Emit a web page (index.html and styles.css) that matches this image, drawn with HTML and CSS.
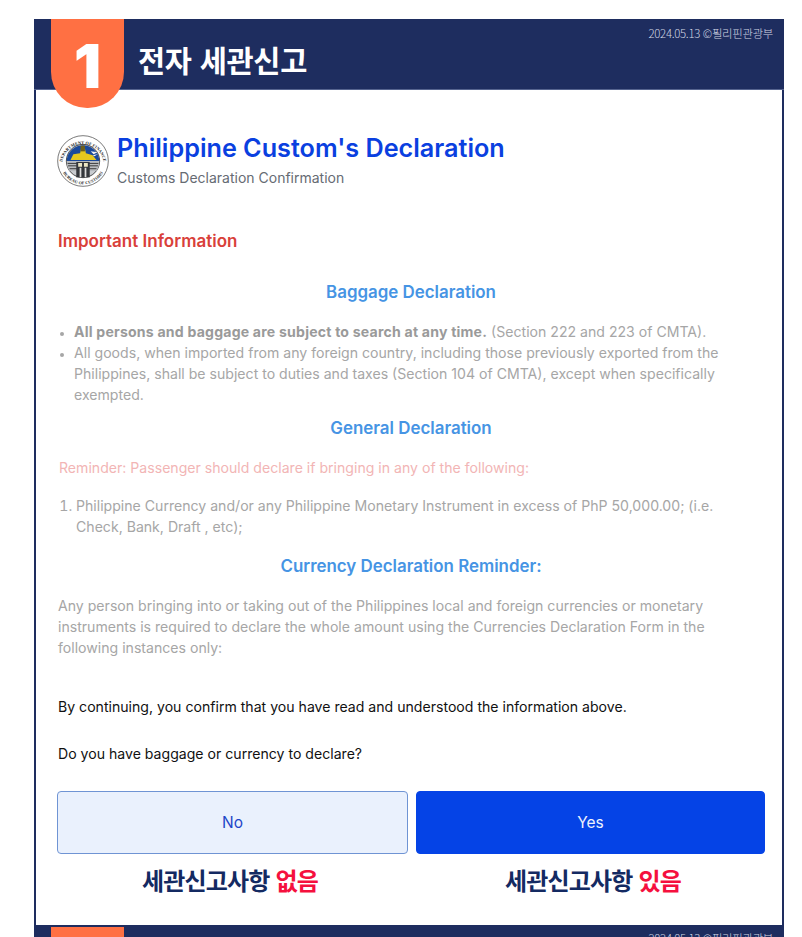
FILE: index.html
```html
<!DOCTYPE html>
<html lang="ko">
<head>
<meta charset="utf-8">
<title>전자 세관신고</title>
<link rel="stylesheet" href="styles.css">
</head>
<body>
<div class="frame">
  <header class="bar">
    <div class="tab"><span class="tab-num">1</span></div>
    <h1 class="bar-title">전자 세관신고</h1>
    <p class="bar-note">2024.05.13 ©필리핀관광부</p>
  </header>
  <main class="content">
    <div class="brand">
      <svg class="seal" viewBox="0 0 54 54" aria-hidden="true">
        <defs>
          <path id="ring-top" d="M5.500 29a21.600 21.600 0 0 1 43 0"/>
          <path id="ring-bottom" d="M3.300 31a24 24 0 0 0 47.400 0"/>
        </defs>
        <circle cx="27" cy="27" r="26.300" fill="#fff" stroke="#666" stroke-width="0.9"/>
        <circle cx="27" cy="27" r="17.300" fill="#c9ccd0" stroke="#222" stroke-width="0.8"/>
        <text class="seal-text"><textPath href="#ring-top" startOffset="50%" text-anchor="middle">DEPARTMENT OF FINANCE</textPath></text>
        <text class="seal-text"><textPath href="#ring-bottom" startOffset="50%" text-anchor="middle">BUREAU OF CUSTOMS</textPath></text>
        <path d="M10.200 25a17 17 0 0 1 33.600 0v2H10.200z" fill="#1b4a9c"/>
        <path d="M35 17l7 1-4 2zM37 21l5-1-3 2z" fill="#f2f2f2"/>
        <path d="M14 26l3-6 7-1 1-5h4l1 5 7 2 4 5z" fill="#e6c81e"/>
        <path d="M24.500 11h4.500v6h-4.500z" fill="#6e5f1a"/>
        <path d="M10.100 27h33.800c0 4-1 7-3 10.500H13.100c-2-3.500-3-6.500-3-10.500z" fill="#b9bcc0"/>
        <path d="M11 29.500h32M11.500 32h31M13 35h28" stroke="#2a2a2a" stroke-width="0.9"/>
        <path d="M20 28h14v16h-14z" fill="#34373c"/>
        <path d="M22 29h4v4h-4zM28 29h4v4h-4z" fill="#ece6c4"/>
        <path d="M23.500 34h1.800v10h-1.800zM28.700 34h1.800v10h-1.800z" fill="#dcdcdc"/>
      </svg>
      <div class="brand-text">
        <h2 class="brand-title">Philippine Custom's Declaration</h2>
        <p class="brand-sub">Customs Declaration Confirmation</p>
      </div>
    </div>

    <h3 class="important">Important Information</h3>

    <h4 class="section-head head-baggage">Baggage Declaration</h4>
    <ul class="bullets">
      <li><strong>All persons and baggage are subject to search at any time.</strong> (Section 222 and 223 of CMTA).</li>
      <li>All goods, when imported from any foreign country, including those previously exported from the Philippines, shall be subject to duties and taxes (Section 104 of CMTA), except when specifically exempted.</li>
    </ul>

    <h4 class="section-head head-general">General Declaration</h4>
    <p class="reminder">Reminder: Passenger should declare if bringing in any of the following:</p>
    <ol class="numbers">
      <li>Philippine Currency and/or any Philippine Monetary Instrument in excess of PhP 50,000.00; (i.e. Check, Bank, Draft , etc);</li>
    </ol>

    <h4 class="section-head head-currency">Currency Declaration Reminder:</h4>
    <p class="muted">Any person bringing into or taking out of the Philippines local and foreign currencies or monetary instruments is required to declare the whole amount using the Currencies Declaration Form in the following instances only:</p>

    <p class="confirm">By continuing, you confirm that you have read and understood the information above.</p>
    <p class="question">Do you have baggage or currency to declare?</p>

    <div class="choices">
      <div class="choice">
        <button class="btn btn-no" type="button">No</button>
        <p class="caption caption-left">세관신고사항 <span class="caption-red">없음</span></p>
      </div>
      <div class="choice">
        <button class="btn btn-yes" type="button">Yes</button>
        <p class="caption caption-right">세관신고사항 <span class="caption-red">있음</span></p>
      </div>
    </div>
  </main>
  <div class="bar bar-next">
    <div class="tab tab-next"></div>
    <p class="bar-note note-next">2024.05.13 ©필리핀관광부</p>
  </div>
</div>
</body>
</html>
```
FILE: styles.css
```css
* { box-sizing: border-box; }
html, body { margin: 0; height: 937px; overflow: hidden; background: #fff; }
body { padding: 19px 0 0 34px; font-family: Inter, "Noto Sans CJK KR", sans-serif; }
h1, h2, h3, h4, p, ul, ol { margin: 0; padding: 0; font-weight: 400; }

.frame { width: 750px; }

.bar { position: relative; height: 71px; background: #1e2d5f; border-bottom: 1px solid #56648f; }
.tab {
  position: absolute; left: 17px; top: 0; width: 73px; height: 89px;
  display: flex; justify-content: center; align-items: center; padding-top: 4px;
  background: #ff7043; border-radius: 0 0 36px 36px; z-index: 1;
}
.tab-num { font-size: 60px; font-weight: 900; line-height: 1; color: #fff; font-family: Inter, sans-serif; }
.bar-title {
  position: absolute; left: 104px; top: 20px;
  font: 700 29.500px/40px "Noto Sans CJK KR", sans-serif; color: #fff; letter-spacing: -0.3px;
}
.bar-note {
  position: absolute; right: 11px; top: 6px;
  font: 300 11.400px/16px "Noto Sans CJK KR", sans-serif; color: #d3d7e4; letter-spacing: -0.3px;
}

.content {
  height: 835px; margin: 0; padding: 43px 18px 0 22px;
  background: #fff; border: solid #1e2d5f; border-width: 0 2px;
}

.brand { display: flex; align-items: flex-start; gap: 7px; height: 55px; }
.seal { width: 52px; height: 52px; flex: none; margin: 2px 0 0 -1px; }
.seal-text { font: 700 4.400px "Liberation Serif", serif; fill: #222; letter-spacing: 0.1px; }
.brand-text { margin-left: 1px; }
.brand-title { font-size: 25.200px; line-height: 30px; font-weight: 600; color: #0a40e0; }
.brand-sub { font-size: 14px; line-height: 20px; margin-top: 5px; color: #666b73; }

.important { margin-top: 41px; font-size: 17px; line-height: 24px; font-weight: 600; color: #d9403a; }

.section-head { font-size: 16.900px; line-height: 24px; font-weight: 600; color: #4694e4; text-align: center; }
.head-baggage { margin-top: 27px; }
.head-general { margin-top: 11px; }
.head-currency { margin-top: 17px; }

.bullets { margin-top: 17px; padding-left: 16px; font-size: 14.100px; line-height: 21px; color: #a6a6a6; }
.bullets li::marker { font-size: 11px; }
.bullets strong { font-weight: 700; color: #9a9a9a; letter-spacing: 0.2px; }
.reminder { margin-top: 17px; padding-left: 1px; font-size: 14.100px; line-height: 21px; color: #f2b5b5; }
.numbers { margin-top: 17px; padding: 0 30px 0 18px; font-size: 14.100px; line-height: 21px; color: #a6a6a6; }
.muted { margin-top: 17px; font-size: 14.100px; line-height: 21px; color: #a6a6a6; }
.confirm { margin-top: 38px; font-size: 14.100px; line-height: 21px; color: #111; }
.question { margin-top: 26px; font-size: 14.100px; line-height: 21px; color: #111; }

.choices { display: grid; grid-template-columns: 351px 349px; gap: 8px; margin: 27px 0 0 -1px; }
.choice { display: flex; flex-direction: column; align-items: center; }
.btn {
  width: 100%; height: 63px; border-radius: 4px; font: 400 15.500px/21px Inter, sans-serif; padding: 0;
}
.btn-no { background: #eaf1fd; border: 1px solid #6f94d4; color: #1e46c8; }
.btn-yes { background: #0543e6; border: 1px solid #0543e6; color: #eef2fd; }
.caption { margin-top: 9px; font: 700 24px/34px "Noto Sans CJK KR", sans-serif; color: #142a62; letter-spacing: -0.8px; }
.caption-left { margin-right: 5px; }
.caption-right { margin-left: 5px; }
.caption-red { color: #f5103e; }

.bar-next { height: 71px; border-bottom: 0; }
.tab-next { height: 40px; border-radius: 0; top: 2px; }
.note-next { top: 5px; }
```
